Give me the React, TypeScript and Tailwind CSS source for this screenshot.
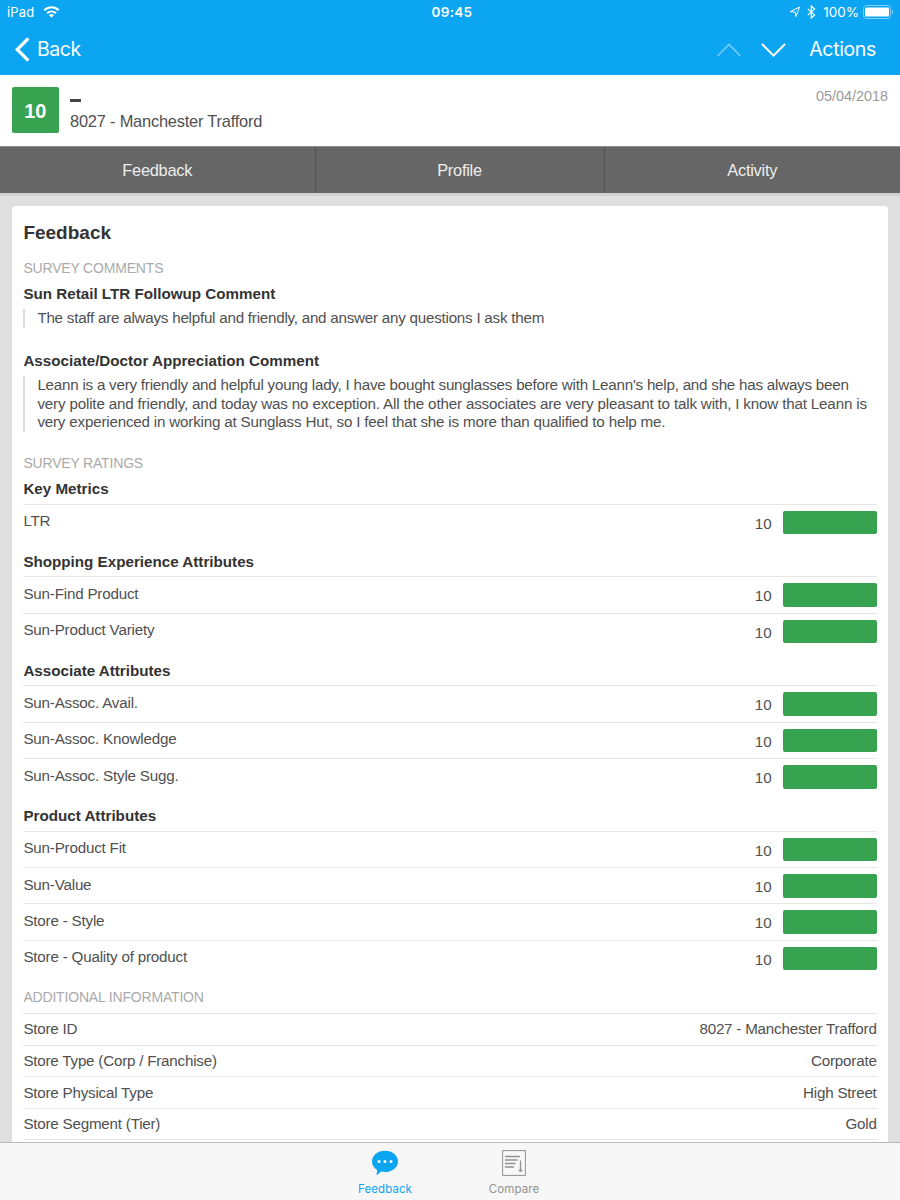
import React from "react";
import clsx from "clsx";

const ratingGroups = [
  { title: "Key Metrics", items: [{ label: "LTR", score: 10 }] },
  {
    title: "Shopping Experience Attributes",
    items: [
      { label: "Sun-Find Product", score: 10 },
      { label: "Sun-Product Variety", score: 10 },
    ],
  },
  {
    title: "Associate Attributes",
    items: [
      { label: "Sun-Assoc. Avail.", score: 10 },
      { label: "Sun-Assoc. Knowledge", score: 10 },
      { label: "Sun-Assoc. Style Sugg.", score: 10 },
    ],
  },
  {
    title: "Product Attributes",
    items: [
      { label: "Sun-Product Fit", score: 10 },
      { label: "Sun-Value", score: 10 },
      { label: "Store - Style", score: 10 },
      { label: "Store - Quality of product", score: 10 },
    ],
  },
];

const storeInfo = [
  { label: "Store ID", value: "8027 - Manchester Trafford" },
  { label: "Store Type (Corp / Franchise)", value: "Corporate" },
  { label: "Store Physical Type", value: "High Street" },
  { label: "Store Segment (Tier)", value: "Gold" },
];

export default function App() {
  return (
    <div className="flex h-[1200px] w-[900px] flex-col overflow-hidden bg-[#dfdfdf] font-['Liberation_Sans',sans-serif] text-[15.2px] text-[#505050]">
      <header className="h-[75px] shrink-0 bg-[#0ba5f2] font-[Inter,sans-serif] text-white">
        <StatusBar />
        <NavBar />
      </header>
      <RecordHeader />
      <Tabs />
      <main className="min-h-0 flex-1 overflow-hidden border-t-[3px] border-[#d0d0d0] px-[11.7px] pt-[10px]">
        <FeedbackCard />
      </main>
      <TabBar />
    </div>
  );
}

function StatusBar() {
  return (
    <div className="grid h-6 grid-cols-3 items-center pr-[6px] pl-[7px] text-[13px]">
      <div className="flex items-center gap-2">
        <span className="pt-[2px] tracking-[0.2px]">iPad</span>
        <svg width="17" height="12" viewBox="0 0 17 12" fill="none">
          <path d="M1.3 4.3a10.3 10.3 0 0 1 14.4 0" stroke="white" strokeWidth="2" />
          <path d="M4 7.2a6.4 6.4 0 0 1 9 0" stroke="white" strokeWidth="1.9" />
          <path d="M8.5 11.8 5.9 9.1a3.8 3.8 0 0 1 5.2 0z" fill="white" />
        </svg>
      </div>
      <div className="pl-[3px] text-center text-[13.5px] font-semibold tracking-[0.3px]">
        09:45
      </div>
      <div className="flex items-center justify-end">
        <svg width="12" height="12" viewBox="0 0 12 12" fill="none">
          <path
            d="M10.5 1 7 10.500 6 6 1.200 5.700z"
            stroke="white"
            strokeWidth="1"
            strokeLinejoin="round"
          />
        </svg>
        <svg className="ml-[6px]" width="9" height="14" viewBox="0 0 9 14" fill="none">
          <path d="m.8 3.9 6.8 6L4.3 13V1l3.3 3.1-6.8 6" stroke="white" strokeWidth="1.2" />
        </svg>
        <span className="ml-[7px] text-[13.5px] tracking-[0px]">100%</span>
        <svg className="ml-[4px]" width="31" height="14" viewBox="0 0 31 14" fill="none">
          <rect x=".5" y=".5" width="27" height="13" rx="3" stroke="#7fd0fa" />
          <rect x="2" y="2.5" width="24" height="9" rx="1.5" fill="white" />
          <path d="M29 5v4c1.6-.8 1.6-3.2 0-4z" fill="#7fd0fa" />
        </svg>
      </div>
    </div>
  );
}

function NavBar() {
  return (
    <div className="flex h-[51px] items-center pr-6 pl-[15px] text-[19.5px]">
      <svg width="15" height="25" viewBox="0 0 15 25" fill="none">
        <path d="M13.3 1.3 2.2 12.5l11.1 11.2" stroke="white" strokeWidth="3.3" />
      </svg>
      <span className="ml-[7px] tracking-[-0.45px]">Back</span>
      <div className="ml-auto flex items-center">
        <svg width="24" height="14" viewBox="0 0 24 14" fill="none">
          <path d="m.6 13 11.4-11.6L23.4 13" stroke="#79cdf8" strokeWidth="1.5" />
        </svg>
        <svg className="ml-[20px]" width="25" height="14" viewBox="0 0 25 14" fill="none">
          <path d="m1 1 11.5 11.6L24 1" stroke="white" strokeWidth="2" />
        </svg>
        <span className="ml-[23px] tracking-[-0.35px]">Actions</span>
      </div>
    </div>
  );
}

function RecordHeader() {
  return (
    <div className="flex h-[71px] shrink-0 items-start bg-white pt-3 pr-3 pl-3">
      <div className="flex h-[46px] w-[46.5px] items-center justify-center rounded-[2px] bg-[#37a351] pt-[2px] text-[20px] font-bold text-white">
        10
      </div>
      <div className="ml-[11.5px]">
        <div className="mt-[12px] h-[3px] w-[11px] bg-[#444]" />
        <div className="mt-[9px] text-[16.4px] leading-5 tracking-[-0.2px]">
          8027 - Manchester Trafford
        </div>
      </div>
      <div className="ml-auto text-[14.4px] leading-[19px] text-[#999]">05/04/2018</div>
    </div>
  );
}

function Tabs() {
  const tab = "flex items-center justify-center border-[#525252]";
  return (
    <div className="grid h-[47px] shrink-0 grid-cols-[315.5px_289px_1fr] border-t border-[#909090] bg-[#666] text-[16.4px] tracking-[-0.25px] text-[#eee]">
      <div className={clsx(tab, "border-r")}>Feedback</div>
      <div className={clsx(tab, "border-r")}>Profile</div>
      <div className={tab}>Activity</div>
    </div>
  );
}

function FeedbackCard() {
  return (
    <section className="h-[1000px] rounded-t-[4px] bg-white px-[11.7px] pt-4">
      <h1 className="text-[19px] leading-[21px] font-bold text-[#333]">Feedback</h1>

      <SectionTitle className="mt-[16px]">Survey Comments</SectionTitle>
      <Comment title="Sun Retail LTR Followup Comment">
        <span className="block tracking-[-0.24px]">
          The staff are always helpful and friendly, and answer any questions I ask
          them
        </span>
      </Comment>
      <div className="h-[17.1px]" />
      <Comment title="Associate/Doctor Appreciation Comment">
        <span className="block tracking-[-0.235px]">
          Leann is a very friendly and helpful young lady, I have bought sunglasses
          before with Leann's help, and she has always been
        </span>
        <span className="block tracking-[-0.175px]">
          very polite and friendly, and today was no exception. All the other
          associates are very pleasant to talk with, I know that Leann is
        </span>
        <span className="block tracking-[-0.2px]">
          very experienced in working at Sunglass Hut, so I feel that she is more
          than qualified to help me.
        </span>
      </Comment>

      <SectionTitle className="mt-[22.3px]">Survey Ratings</SectionTitle>
      <div className="mt-[-6px]">
        {ratingGroups.map((group) => (
          <RatingGroup key={group.title} {...group} />
        ))}
      </div>

      <SectionTitle className="mt-[12.3px]">Additional Information</SectionTitle>
      <div className="mt-[5.6px] tracking-[-0.22px]">
        {storeInfo.map((info) => (
          <div
            key={info.label}
            className="flex h-[31.64px] items-center justify-between border-t border-[#e6e6e6] pt-px"
          >
            <span>{info.label}</span>
            <span>{info.value}</span>
          </div>
        ))}
        <div className="border-t border-[#e6e6e6]" />
      </div>
    </section>
  );
}

function SectionTitle({
  className,
  children,
}: {
  className?: string;
  children: React.ReactNode;
}) {
  return (
    <h2
      className={clsx(
        "text-[14px] leading-[19px] tracking-[-0.18px] text-[#aaa] uppercase",
        className,
      )}
    >
      {children}
    </h2>
  );
}

function Comment({ title, children }: { title: string; children: React.ReactNode }) {
  return (
    <div className="pt-[6px]">
      <h3 className="leading-[19px] font-bold text-[#333]">{title}</h3>
      <p className="mt-[6px] border-l-2 border-[#ddd] pl-[12px] leading-[18.75px] whitespace-nowrap">
        {children}
      </p>
    </div>
  );
}

function RatingGroup({
  title,
  items,
}: {
  title: string;
  items: { label: string; score: number }[];
}) {
  return (
    <>
      <h3 className="h-[36.33px] pt-[12px] leading-[19px] font-bold text-[#333]">
        {title}
      </h3>
      {items.map((item) => (
        <div
          key={item.label}
          className="flex h-[36.33px] items-start border-t border-[#e6e6e6]"
        >
          <span className="pt-[6.5px] leading-[19px] tracking-[-0.2px]">{item.label}</span>
          <span className="mt-[9px] ml-auto leading-[19px]">{item.score}</span>
          <div className="mt-[6px] ml-[11px] h-[23.5px] w-[94px] rounded-[2px] bg-[#37a351]" />
        </div>
      ))}
    </>
  );
}

function TabBar() {
  return (
    <nav className="flex h-[58px] shrink-0 justify-center border-t border-[#b8b8b8] bg-[#f7f7f7] pr-px font-[Inter,sans-serif] text-[11.5px] tracking-[0.1px] text-[#929292]">
      <div className="flex w-[129px] flex-col items-center pt-[7px] text-[#0ba5f2]">
        <svg width="26" height="26" viewBox="0 0 26 26">
          <path
            d="M13 .8c7.2 0 13 4.7 13 10.6S20.2 22 13 22c-1.4 0-2.7-.2-3.9-.5C7.6 23.2 5.7 24.500 3.900 24.900c.9-1.300 1.400-3.200 1.200-5C1.900 18 0 14.900 0 11.400 0 5.500 5.800.8 13 .8z"
            fill="currentColor"
          />
          <circle cx="7" cy="11.5" r="1.5" fill="white" />
          <circle cx="13" cy="11.5" r="1.5" fill="white" />
          <circle cx="19" cy="11.5" r="1.5" fill="white" />
        </svg>
        <span className="mt-[6px] leading-[15px]">Feedback</span>
      </div>
      <div className="flex w-[129px] flex-col items-center pt-[7px]">
        <svg width="24" height="26" viewBox="0 0 24 26" fill="none" stroke="currentColor">
          <rect x=".6" y=".6" width="22.8" height="24.8" />
          <path d="M3 6.500h15M3 10h12.500M3 13.500h10.500M3 17h9" strokeWidth="1.4" />
          <path d="M18.500 10.500v10" strokeWidth="1.3" />
          <path d="m16.500 20 2 2 2-2z" fill="currentColor" strokeWidth=".6" />
        </svg>
        <span className="mt-[6px] leading-[15px]">Compare</span>
      </div>
    </nav>
  );
}
